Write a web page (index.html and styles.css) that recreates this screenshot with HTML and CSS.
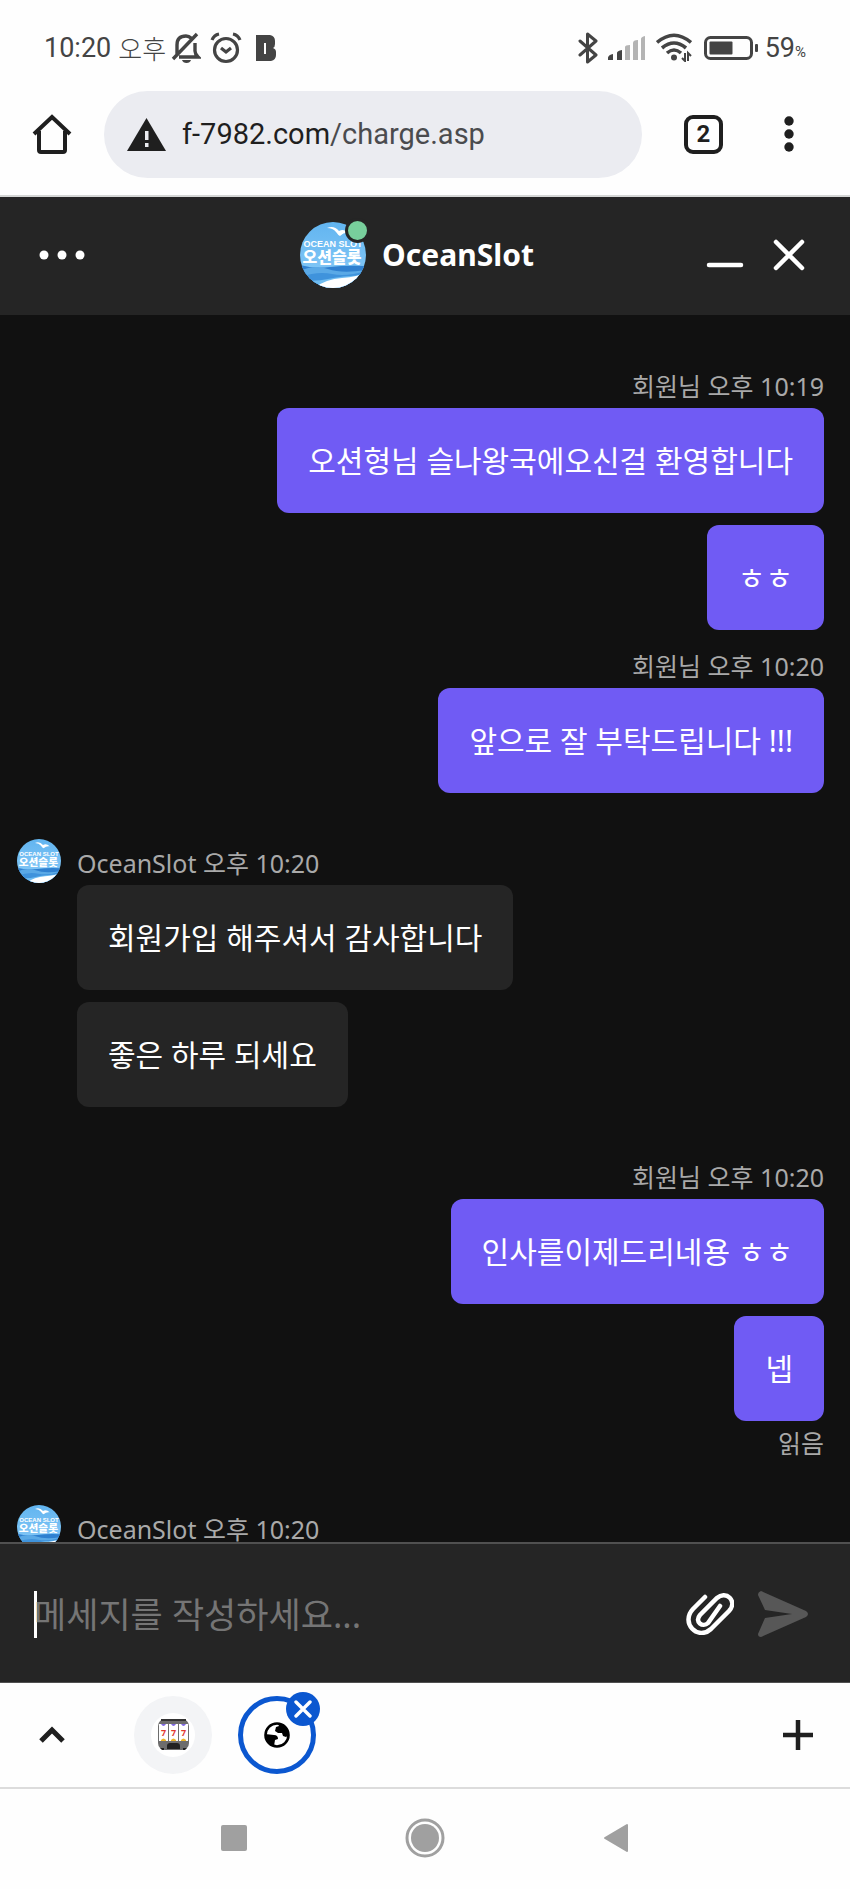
FILE: index.html
```html
<!DOCTYPE html>
<html lang="ko">
<head>
<meta charset="utf-8">
<meta name="viewport" content="width=device-width, initial-scale=1">
<title>OceanSlot</title>
<link rel="stylesheet" href="styles.css">
</head>
<body>
<svg class="defs" aria-hidden="true">
  <defs>
    <clipPath id="disc"><circle cx="33" cy="33" r="33"/></clipPath>
    <linearGradient id="sky" x1="0" y1="0" x2="0" y2="1">
      <stop offset="0" stop-color="#62b5f0"/><stop offset="1" stop-color="#8acbf8"/>
    </linearGradient>
    <symbol id="brand" viewBox="0 0 66 66">
      <g clip-path="url(#disc)">
        <rect width="66" height="66" fill="url(#sky)"/>
        <path d="M0 43q14 4 30 2t36-1v22H0z" fill="#2f80d0"/>
        <path d="M0 49q14-7 28-2t38 1v18H0z" fill="#5aa9e6"/>
        <path d="M0 55q18-6 32-3t34-3v17H0z" fill="#3f93dc"/>
        <path d="M0 58q16 2 28-1t38-4v13H0z" fill="#6fbcf0"/>
        <path d="M14 66q12-9 28-10t24-6v16z" fill="#fff"/>
        <path d="M27 6q7-3 12 3q5-3 10 2q-5-1-9 3q-2-1-4-4q-3-4-9-4z" fill="#fff"/>
        <text class="brand-en" x="33" y="25" text-anchor="middle">OCEAN SLOT</text>
        <text class="brand-ko" x="32" y="41" text-anchor="middle">오션슬롯</text>
      </g>
    </symbol>
  </defs>
</svg>

<div class="phone">
  <div class="status">
    <span class="clock">10:20</span>
    <span class="ampm">오후</span>
    <svg class="bell" viewBox="0 0 30 32" width="30" height="32" fill="none" stroke="#444" stroke-width="3.4">
      <path d="M6 23V13q0-9 9-9q3 0 5 2M24 11v8q0 3 3 6H8M2 27L26 2"/>
      <path d="M11 28h9q-1 3-4.500 3T11 28z" fill="#444" stroke="none"/>
    </svg>
    <svg class="alarm" viewBox="0 0 32 32" width="32" height="32" fill="none" stroke="#444" stroke-width="3.200">
      <circle cx="16" cy="18" r="11.500"/><path d="M2 8q2-5 7-6M30 8q-2-5-7-6M11 16l5 4 5-4"/>
    </svg>
    <svg class="bmark" viewBox="0 0 20 26" width="20" height="26">
      <path fill="#444" fill-rule="evenodd" d="M0 0h14q5 1 5 6v3q0 3-2 4q3 1 3 4v3q0 5-5 6H0zM8 8v11h2V8z"/>
    </svg>
    <span class="spacer"></span>
    <svg viewBox="0 0 20 32" width="20" height="32" fill="none" stroke="#444" stroke-width="3" stroke-linejoin="round" stroke-linecap="round">
      <path d="M2 9l16 14-8.500 7V2L18 9 2 23"/>
    </svg>
    <svg class="signal" viewBox="0 0 38 24" width="38" height="24">
      <path fill="#444" d="M0 24q-1-5 5-6v6zM9 24v-7q0-2 5-3v10z"/>
      <path fill="#b4b4b4" d="M17 24V11q0-2 5-2v15zM25 24V7q0-3 5-3v20zM33 24V3q0-2 4-3v24z"/>
    </svg>
    <svg class="wifi" viewBox="0 0 36 29" width="36" height="29" fill="none" stroke="#444" stroke-width="3.600">
      <path d="M1 9.500Q18-5 35 9.500M6 15q12-10 24 0M11 20q7-6 14 0"/>
      <circle cx="18" cy="24.500" r="3" fill="#444" stroke="none"/>
      <path stroke-width="2" d="M29 20v8l-3-3M32 28v-8l3 3"/>
    </svg>
    <svg class="battery" viewBox="0 0 54 24" width="54" height="24">
      <rect x="1.500" y="1.500" width="46" height="21" rx="5" fill="none" stroke="#444" stroke-width="3"/>
      <rect x="5.500" y="5.500" width="23" height="13" rx="1" fill="#444"/><rect x="51" y="8" width="3" height="8" rx="1" fill="#444"/>
    </svg>
    <span class="level">59<small>%</small></span>
  </div>

  <div class="toolbar">
    <button class="icon" aria-label="홈">
      <svg viewBox="0 0 40 40" width="40" height="40" fill="none" stroke="#1f1f1f" stroke-width="4">
        <path d="M2 20L20 3l18 17M7 17v19q0 2 2 2h22q2 0 2-2V17"/>
      </svg>
    </button>
    <a class="address" href="#">
      <svg viewBox="0 0 39 33" width="39" height="33"><path fill="#1f1f1f" d="M19.500 0L39 33H0z"/><path fill="#ebecf1" d="M18 13h3.500v9H18zM18 25h3.500v4H18z"/></svg>
      <span>f-7982.com<span class="path">/charge.asp</span></span>
    </a>
    <button class="tabs" aria-label="탭">2</button>
    <button class="icon more" aria-label="메뉴">
      <svg viewBox="0 0 10 36" width="10" height="36" fill="#1f1f1f"><circle cx="5" cy="5" r="4.700"/><circle cx="5" cy="18" r="4.700"/><circle cx="5" cy="31" r="4.700"/></svg>
    </button>
  </div>

  <header class="header">
    <button class="icon" aria-label="옵션">
      <svg viewBox="0 0 46 12" width="46" height="12" fill="#fff"><circle cx="5" cy="6" r="4.500"/><circle cx="23" cy="6" r="4.500"/><circle cx="41" cy="6" r="4.500"/></svg>
    </button>
    <div class="who">
      <div class="face"><svg width="66" height="66"><use href="#brand"/></svg><span class="online"></span></div>
      <h1>OceanSlot</h1>
    </div>
    <div class="window">
      <button class="icon" aria-label="최소화"><svg viewBox="0 0 38 32" width="38" height="32"><path d="M3 26h32" stroke="#fff" stroke-width="4.500" stroke-linecap="round"/></svg></button>
      <button class="icon" aria-label="닫기"><svg viewBox="0 0 32 32" width="32" height="32"><path d="M3 3l26 26M29 3L3 29" stroke="#fff" stroke-width="4.500" stroke-linecap="round"/></svg></button>
    </div>
  </header>

  <main class="chat">
    <section class="group mine">
      <p class="meta">회원님 오후 10:19</p>
      <p class="bubble">오션형님 슬나왕국에오신걸 환영합니다</p>
      <p class="bubble">ㅎㅎ</p>
    </section>
    <section class="group mine follow">
      <p class="meta">회원님 오후 10:20</p>
      <p class="bubble">앞으로 잘 부탁드립니다 !!!</p>
    </section>
    <section class="group agent">
      <svg class="avatar" width="44" height="44"><use href="#brand"/></svg>
      <div class="stack">
        <p class="meta">OceanSlot 오후 10:20</p>
        <p class="bubble">회원가입 해주셔서 감사합니다</p>
        <p class="bubble">좋은 하루 되세요</p>
      </div>
    </section>
    <section class="group mine">
      <p class="meta">회원님 오후 10:20</p>
      <p class="bubble">인사를이제드리네용 ㅎㅎ</p>
      <p class="bubble">넵</p>
      <p class="meta read">읽음</p>
    </section>
    <section class="group agent">
      <svg class="avatar" width="44" height="44"><use href="#brand"/></svg>
      <div class="stack">
        <p class="meta">OceanSlot 오후 10:20</p>
      </div>
    </section>
  </main>

  <form class="composer">
    <span class="caret"></span>
    <input type="text" aria-label="메세지" placeholder="메세지를 작성하세요...">
    <button class="icon" type="button" aria-label="파일 첨부">
      <svg viewBox="0 0 48 42" width="48" height="42" fill="none" stroke="#fff" stroke-width="4.500" stroke-linecap="round">
        <path d="M19 4L7 16C-6 30 12 48 25 36L43 18C52 8 40-3 31 5L14 22C8 29 17 35 22 30L34 13"/>
      </svg>
    </button>
    <button class="icon" type="button" aria-label="보내기">
      <svg viewBox="0 0 50 46" width="50" height="46"><path fill="#575757" d="M3 0L48 20q4 3 0 6L3 46q-3 0-3-3l7-16 27-4L7 19 0 4q0-3 3-4z"/></svg>
    </button>
  </form>

  <div class="tabstrip">
    <button class="icon" aria-label="펼치기"><svg viewBox="0 0 28 18" width="28" height="18"><path d="M3 15L14 4l11 11" fill="none" stroke="#1f1f1f" stroke-width="5"/></svg></button>
    <button class="site slot" aria-label="슬롯">
      <svg viewBox="0 0 44 44" width="44" height="44">
        <circle cx="22" cy="22" r="22" fill="#fff"/>
        <rect x="7" y="6" width="31" height="31" rx="7" fill="#6d6d6d"/>
        <path d="M10 7h25" stroke="#333" stroke-width="2"/>
        <path fill="#fff" d="M8 11h9v17H8zM18 11h9v17h-9zM28 11h9v17h-9z"/>
        <path fill="#7d66e3" d="M10 11h5q-2.500 4-5 0zM20 11h5q-2.500 4-5 0zM30 11h5q-2.500 4-5 0z"/>
        <path fill="#edb52b" d="M10 28v-1q2.500-3 5 0v1zM20 28v-1q2.500-3 5 0v1zM30 28v-1q2.500-3 5 0v1z"/>
        <path fill="#222" d="M16 36v-3q0-3 3-3h7q3 0 3 3v3zM9 35h4v2h-2zM36 35h-4v2h2z"/>
        <text class="seven" x="12.500" y="23" text-anchor="middle">7</text>
        <text class="seven" x="22.500" y="23" text-anchor="middle">7</text>
        <text class="seven" x="32.500" y="23" text-anchor="middle">7</text>
      </svg>
    </button>
    <div class="current">
      <button class="site web" aria-label="현재 탭">
        <svg viewBox="0 0 26 26" width="26" height="26">
          <circle cx="13" cy="13" r="11.500" fill="#fff" stroke="#000" stroke-width="2.600"/>
          <path d="M14 2q9 0 11 11l-3 2-3-1-1-3h-4l-3-2 1-4 3-1zM1 12l9 1q4 0 4 4l-3 1-1 6Q2 22 1 12z"/>
        </svg>
      </button>
      <button class="drop" aria-label="탭 닫기"><svg viewBox="0 0 18 18" width="18" height="18"><path d="M2 2l14 14M16 2L2 16" stroke="#fff" stroke-width="3.400" stroke-linecap="round"/></svg></button>
    </div>
    <span class="spacer"></span>
    <button class="icon" aria-label="새 탭"><svg viewBox="0 0 30 30" width="30" height="30"><path d="M15 0v30M0 15h30" stroke="#1f1f1f" stroke-width="4.500"/></svg></button>
  </div>

  <nav class="system">
    <button class="icon" aria-label="최근 앱"><svg viewBox="0 0 26 26" width="26" height="26"><rect width="26" height="26" rx="2" fill="#a0a0a0"/></svg></button>
    <button class="icon" aria-label="홈 화면"><svg viewBox="0 0 40 40" width="40" height="40"><circle cx="20" cy="20" r="18" fill="none" stroke="#a0a0a0" stroke-width="3"/><circle cx="20" cy="20" r="14" fill="#a0a0a0"/></svg></button>
    <button class="icon" aria-label="뒤로"><svg viewBox="0 0 26 30" width="26" height="30"><path d="M2 15L24 2v26z" fill="#a0a0a0" stroke="#a0a0a0" stroke-width="2" stroke-linejoin="round"/></svg></button>
  </nav>
</div>
</body>
</html>
```
FILE: styles.css
```css
* { box-sizing: border-box; }

body {
  margin: 0;
  background: #fefefe;
  font-family: "Noto Sans", "Noto Sans CJK KR", sans-serif;
}

h1, p { margin: 0; }

button {
  padding: 0;
  border: 0;
  background: none;
  font: inherit;
  color: inherit;
}

svg { display: block; flex: none; }

.defs { position: absolute; width: 0; height: 0; }
.icon { display: flex; flex: none; }
.spacer { flex: 1; }

.brand-en { font: 700 9px "Liberation Sans", sans-serif; fill: #fff; }
.brand-ko { font: 900 16px "Noto Sans CJK KR", sans-serif; fill: #fff; }
.seven { font: 700 9px "Noto Sans", sans-serif; fill: #e2382e; }

.phone {
  display: flex;
  flex-direction: column;
  height: 100vh;
}

/* Status bar */
.status {
  display: flex;
  align-items: center;
  height: 90px;
  padding: 5px 44px 0 44px;
  color: #444;
  font-family: Roboto, "Noto Sans CJK KR", sans-serif;
  font-size: 27px;
}

.ampm { margin-left: 7px; font-size: 26px; font-weight: 300; }
.bell { margin-left: 5px; }
.alarm { margin-left: 9px; }
.bmark { margin-left: 14px; }
.signal { margin-left: 10px; }
.wifi { margin-left: 10px; }
.battery { margin-left: 12px; }
.level { margin-left: 7px; }
.level small { font-size: 15px; }

/* Browser toolbar */
.toolbar {
  display: flex;
  align-items: center;
  height: 107px;
  padding: 0 56px 17px 32px;
  border-bottom: 2px solid #d4d6d5;
  color: #1f1f1f;
  font-family: Roboto, sans-serif;
}

.address {
  display: flex;
  flex: 1;
  align-items: center;
  gap: 16px;
  height: 87px;
  margin: 0 42px 0 32px;
  padding: 0 23px;
  border-radius: 44px;
  background: #ebecf1;
  color: #1f1f1f;
  font-size: 29px;
  text-decoration: none;
}

.path { color: #4a4b4e; }

.tabs {
  width: 39px;
  height: 39px;
  border: 4px solid #1f1f1f;
  border-radius: 9px;
  font-size: 24px;
  font-weight: 700;
  line-height: 30px;
}

.more { margin-left: 61px; }

/* Chat header */
.header {
  display: grid;
  grid-template-columns: 1fr auto 1fr;
  align-items: center;
  height: 118px;
  padding: 0 45px 2px 39px;
  background: #252525;
  color: #fff;
}

.who { display: flex; align-items: center; gap: 16px; margin-right: 10px; }
.who h1 { font-size: 30px; line-height: 40px; }
.face { position: relative; }

.online {
  position: absolute;
  top: -4px;
  right: -4px;
  width: 25px;
  height: 25px;
  border: 3px solid #252525;
  border-radius: 50%;
  background: #78cf9c;
}

.window {
  display: flex;
  justify-content: flex-end;
  gap: 29px;
}

/* Conversation */
.chat {
  flex: 1;
  min-height: 0;
  overflow: hidden;
  padding: 1px 26px 0 17px;
  background: #111;
}

.group { margin-top: 54px; }
.group.follow { margin-top: 20px; }

.mine, .stack {
  display: flex;
  flex-direction: column;
  gap: 12px;
}

.mine { align-items: flex-end; }

.agent {
  display: flex;
  align-items: flex-start;
  gap: 16px;
  margin-top: 46px;
}

.stack { align-items: flex-start; padding-top: 8px; }

.meta {
  height: 32px;
  margin-bottom: -6px;
  color: #a9a9a9;
  font-size: 25px;
  line-height: 32px;
}

.meta.read { margin: -6px 0 0; }

.bubble {
  padding: 32px 31px;
  border-radius: 12px;
  background: #252525;
  color: #fff;
  font-size: 30px;
  line-height: 41px;
}

.mine .bubble { background: #705bf4; }

/* Composer */
.composer {
  display: flex;
  align-items: center;
  height: 141px;
  padding: 2px 42px 0 34px;
  border-top: 2px solid #505050;
  border-bottom: 1px solid #505050;
  background: #252525;
}

.caret { width: 3px; height: 47px; margin-right: -3px; background: #fff; }

.composer input {
  flex: 1;
  min-width: 0;
  padding: 0;
  border: 0;
  outline: 0;
  background: none;
  color: #fff;
  font: 35px "Noto Sans", "Noto Sans CJK KR", sans-serif;
}

.composer input::placeholder { color: #757575; opacity: 1; }
.composer .icon + .icon { margin-left: 24px; }

/* Tab strip */
.tabstrip {
  display: flex;
  align-items: center;
  height: 106px;
  padding: 0 37px 0 38px;
  border-bottom: 2px solid #dcdcdc;
}

.site {
  display: flex;
  align-items: center;
  justify-content: center;
  width: 78px;
  height: 78px;
  border-radius: 50%;
}

.slot { margin-left: 68px; background: #f3f4f6; }
.web { border: 5px solid #0b57d0; }
.current { position: relative; margin-left: 26px; }

.drop {
  position: absolute;
  top: -4px;
  right: -4px;
  display: flex;
  align-items: center;
  justify-content: center;
  width: 34px;
  height: 34px;
  border-radius: 50%;
  background: #0b57d0;
}

/* System navigation */
.system {
  display: flex;
  align-items: center;
  justify-content: center;
  gap: 158px;
  height: 100px;
  padding-bottom: 2px;
}
```
